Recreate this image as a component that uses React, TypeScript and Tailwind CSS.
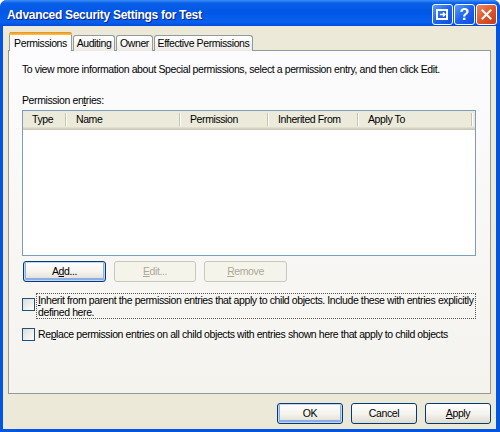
import React from 'react';
import clsx from 'clsx';

const FONT = "font-['Liberation_Sans',Arial,sans-serif]";

function XpButton({
  children,
  disabled,
  isDefault,
  className,
}: {
  children: React.ReactNode;
  disabled?: boolean;
  isDefault?: boolean;
  className?: string;
}) {
  return (
    <div
      className={clsx(
        'flex h-[21px] items-center justify-center rounded-[3px] border',
        disabled
          ? 'border-[#c9c7ba] bg-[#f5f4ea] text-[#aca899]'
          : 'border-[#003c74] bg-linear-to-b from-white via-[#f5f4ef] to-[#dedbcf] text-black',
        isDefault && 'shadow-[inset_0_0_0_1px_#c3d5fd,inset_0_-1px_0_2px_#89ade4]',
        className,
      )}
    >
      {children}
    </div>
  );
}

function Checkbox() {
  return (
    <div className="h-[13px] w-[13px] shrink-0 border border-[#1c5180] bg-linear-to-br from-[#dcdcd7] to-white" />
  );
}

function TitleButton({ children, close }: { children: React.ReactNode; close?: boolean }) {
  return (
    <div
      className={clsx(
        'flex h-[21px] w-[21px] items-center justify-center rounded-[3px] border border-white',
        close
          ? 'bg-linear-to-br from-[#f08a60] via-[#e2552a] to-[#c43c14]'
          : 'bg-linear-to-br from-[#5b9bff] via-[#1e63f0] to-[#0d4fd8]',
      )}
    >
      {children}
    </div>
  );
}

const columns = [
  { label: 'Type', w: 'w-[44px]' },
  { label: 'Name', w: 'w-[114px]' },
  { label: 'Permission', w: 'w-[88px]' },
  { label: 'Inherited From', w: 'w-[90px]' },
  { label: 'Apply To', w: 'w-[114px]' },
];

const tabs = [
  { label: 'Auditing', w: 'w-[42px]' },
  { label: 'Owner', w: 'w-[37px]' },
  { label: 'Effective Permissions', w: 'w-[99px]' },
];

export default function App() {
  return (
    <div className={clsx(FONT, 'flex h-[432px] w-[500px] flex-col overflow-hidden rounded-t-[7px] bg-[#0055e5]')}>
      {/* title bar */}
      <div className="flex h-[26px] shrink-0 items-start bg-[linear-gradient(to_bottom,#3d8ff8_0%,#0a5fe8_12%,#0056e6_50%,#0a60ee_85%,#004bdc_100%)] pl-[7px] pr-[3px] pt-[4px]">
        <div className="mt-[3px] flex-1 text-[12px] font-bold leading-[16px] tracking-[-0.3px] text-white [text-shadow:1px_1px_#0a1e8a]">
          Advanced Security Settings for Test
        </div>
        <div className="flex gap-[1px]">
          <TitleButton>
            <svg width="13" height="11" viewBox="0 0 13 11">
              <rect x="1" y="1" width="10" height="9" fill="none" stroke="white" strokeWidth="2" />
              <path d="M4 5.5h5M7 3.5l2 2-2 2" stroke="white" strokeWidth="1.5" fill="none" />
            </svg>
          </TitleButton>
          <TitleButton>
            <span className="text-[16px] font-bold leading-none text-white">?</span>
          </TitleButton>
          <TitleButton close>
            <svg width="11" height="11" viewBox="0 0 11 11">
              <path d="M1.5 1.5l8 8M9.5 1.5l-8 8" stroke="white" strokeWidth="2" strokeLinecap="square" />
            </svg>
          </TitleButton>
        </div>
      </div>

      {/* client */}
      <div className="mb-[3px] ml-[3px] mr-[4px] flex flex-1 flex-col bg-[#ece9d8] px-[5px] pt-[6px] text-[10.5px] leading-[13px] tracking-[-0.4px] text-black">
        {/* tab strip */}
        <div className="relative z-10 -mb-px flex items-end pl-[1px]">
          <div className="flex h-[19px] w-[63px] flex-col rounded-t-[3px] border border-b-0 border-[#919b9c] bg-[#fcfcfe]">
            <div className="-mx-px -mt-px h-[3px] rounded-t-[3px] bg-linear-to-b from-[#e68b2c] to-[#ffc73c]" />
            <div className="flex flex-1 items-center justify-center">Permissions</div>
          </div>
          {tabs.map((t) => (
            <div
              key={t.label}
              className={clsx(
                t.w,
                'ml-[1px] flex h-[16px] items-center justify-center whitespace-nowrap rounded-t-[3px] border border-b-0 border-[#919b9c] bg-linear-to-b from-white to-[#ecebe5]',
              )}
            >
              {t.label}
            </div>
          ))}
        </div>

        {/* tab panel */}
        <div className="flex h-[344px] flex-col border border-[#919b9c] bg-linear-to-b from-[#fcfcfe] to-[#f4f3ee] pl-[13px] pr-[14px] pt-[12px]">
          <div className="whitespace-nowrap">
            To view more information about Special permissions, select a permission entry, and then click Edit.
          </div>
          <div className="mt-[18px]">
            Permission en<span className="underline">t</span>ries:
          </div>

          {/* list view */}
          <div className="mt-[3px] flex h-[146px] flex-col border border-[#7f9db9] bg-white">
            <div className="flex h-[19px] shrink-0 bg-[#ebeadb] shadow-[inset_0_-1px_#cbc7b8,inset_0_-2px_#d6d2c2,inset_0_-3px_#e2decd]">
              {columns.map((c) => (
                <div key={c.label} className={clsx(c.w, 'flex items-center pb-[2px]')}>
                  <div className="flex-1 whitespace-nowrap pl-[9px]">{c.label}</div>
                  <div className="h-[13px] w-[2px] border-l border-r border-l-[#c7c5b2] border-r-white" />
                </div>
              ))}
            </div>
          </div>

          {/* action buttons */}
          <div className="mt-[5px] flex gap-[8px] pl-[1px]">
            <XpButton isDefault className="w-[83px]">
              A<span className="underline">d</span>d...
            </XpButton>
            <XpButton disabled className="w-[82px]">
              <span className="underline">E</span>dit...
            </XpButton>
            <XpButton disabled className="w-[83px]">
              <span className="underline">R</span>emove
            </XpButton>
          </div>

          {/* inherit checkbox */}
          <div className="mt-[11px] flex items-start">
            <div className="mt-[5px]">
              <Checkbox />
            </div>
            <div className="ml-[1px] flex-1 border border-dotted border-[#555] px-[1px] leading-[12px]">
              <div className="whitespace-nowrap">
                <span className="underline">I</span>nherit from parent the permission entries that apply to child
                objects. Include these with entries explicitly
              </div>
              <div className="whitespace-nowrap">defined here.</div>
            </div>
          </div>

          {/* replace checkbox */}
          <div className="mt-[9px] flex items-center">
            <Checkbox />
            <div className="ml-[3px] whitespace-nowrap">
              Re<span className="underline">p</span>lace permission entries on all child objects with entries shown
              here that apply to child objects
            </div>
          </div>
        </div>

        {/* dialog buttons */}
        <div className="mt-[9px] flex justify-end gap-[8px]">
          <XpButton isDefault className="w-[66px]">
            OK
          </XpButton>
          <XpButton className="w-[66px]">Cancel</XpButton>
          <XpButton className="w-[66px]">
            <span className="underline">A</span>pply
          </XpButton>
        </div>
      </div>
    </div>
  );
}
